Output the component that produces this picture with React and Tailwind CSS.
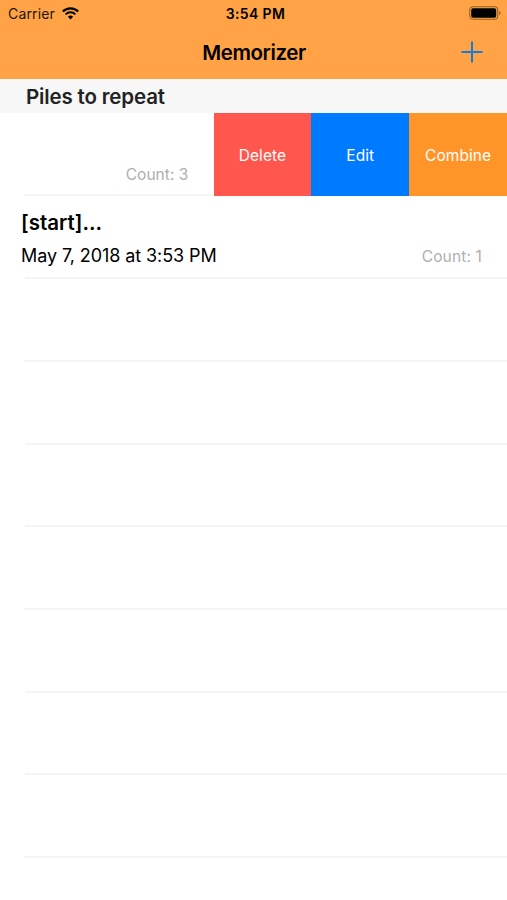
const actions = [
  { label: "Delete", className: "bg-[#ff564d]" },
  { label: "Edit", className: "bg-[#007aff]" },
  { label: "Combine", className: "bg-[#ff9528]" },
];

const emptyRows = [1, 2, 3, 4, 5, 6, 7];

function WifiIcon() {
  return (
    <svg className="ml-[7px] h-[13px] w-[17px]" viewBox="0 0 17 13" fill="none">
      <path d="M0.8 4.5a10.9 10.9 0 0 1 15.4 0" stroke="#000" strokeWidth="2.3" />
      <path d="M3.6 7.4a6.9 6.9 0 0 1 9.8 0" stroke="#000" strokeWidth="2" />
      <path d="M8.5 12.5L5.9 9.8a3.8 3.8 0 0 1 5.2 0z" fill="#000" />
    </svg>
  );
}

function BatteryIcon() {
  return (
    <svg className="h-[14px] w-[33px]" viewBox="0 0 33 14" fill="none">
      <rect x="0.7" y="0.7" width="28" height="12.6" rx="3.2" stroke="#965f27" strokeWidth="1.1" />
      <rect x="2.2" y="2.2" width="25" height="9.6" rx="1.8" fill="#000" />
      <path d="M30.2 4.8c1.8.7 1.8 3.7 0 4.4z" fill="#965f27" />
    </svg>
  );
}

function StatusBar() {
  return (
    <div className="grid h-[27px] grid-cols-3 items-center pl-[8px] pr-[5px] text-[14px] text-[#211509]">
      <div className="flex items-center">
        <span className="tracking-[0.15px]">Carrier</span>
        <WifiIcon />
      </div>
      <span className="pl-px text-center font-semibold tracking-[0.35px] text-black">3:54 PM</span>
      <div className="flex justify-end pb-px">
        <BatteryIcon />
      </div>
    </div>
  );
}

function NavBar() {
  return (
    <div className="grid h-[52px] grid-cols-3 items-center pr-[24px] pl-[25px]">
      <span />
      <h1 className="text-center text-[20.5px] font-semibold tracking-[-0.4px] text-black">Memorizer</h1>
      <button className="justify-self-end pb-[2px]" aria-label="Add">
        <svg className="block h-[22px] w-[22px]" viewBox="0 0 22 22" fill="none">
          <path d="M0.5 11h21M11 0.5v21" stroke="#167bdc" strokeWidth="2" />
        </svg>
      </button>
    </div>
  );
}

export default function App() {
  return (
    <div className="h-[900px] w-[507px] overflow-hidden bg-white font-['Inter',sans-serif]">
      {/* Header */}
      <header className="bg-[#ffa346]">
        <StatusBar />
        <NavBar />
      </header>

      <h2 className="h-[34px] bg-[#f7f7f7] pl-[26px] text-[20.5px] leading-[35px] font-semibold tracking-[-0.15px] text-[#222222]">
        Piles to repeat
      </h2>

      {/* Swiped row */}
      <div className="flex h-[82.7px]">
        <div className="ml-[25px] flex flex-1 items-end justify-end border-b-2 border-[#f4f4f4] pr-[25px] pb-[7px]">
          <span className="text-[15.5px] leading-[24px] tracking-[0.05px] text-[#afafaf]">Count: 3</span>
        </div>
        <div className="flex w-[293.5px]">
          {actions.map((a) => (
            <button
              key={a.label}
              className={`flex-1 pt-[2px] text-[15.5px] tracking-[0.05px] text-white ${a.className}`}
            >
              {a.label}
            </button>
          ))}
        </div>
      </div>

      {/* Pile row */}
      <div className="flex h-[81.7px] flex-col pt-[13px] pr-[25px] pl-[21px] text-black">
        <h3 className="text-[20.5px] leading-[28px] font-semibold">[start]...</h3>
        <div className="mt-[4px] flex items-center justify-between">
          <span className="text-[18px] leading-[28px] tracking-[-0.09px]">May 7, 2018 at 3:53 PM</span>
          <span className="pt-[2px] text-[15.5px] leading-[28px] tracking-[0.15px] text-[#afafaf]">Count: 1</span>
        </div>
      </div>

      {/* Unused rows */}
      {emptyRows.map((n) => (
        <div key={n} className="ml-[25px] h-[82.65px] border-t-2 border-[#f4f4f4]" />
      ))}
      <div className="ml-[25px] border-t-2 border-[#f4f4f4]" />
    </div>
  );
}
